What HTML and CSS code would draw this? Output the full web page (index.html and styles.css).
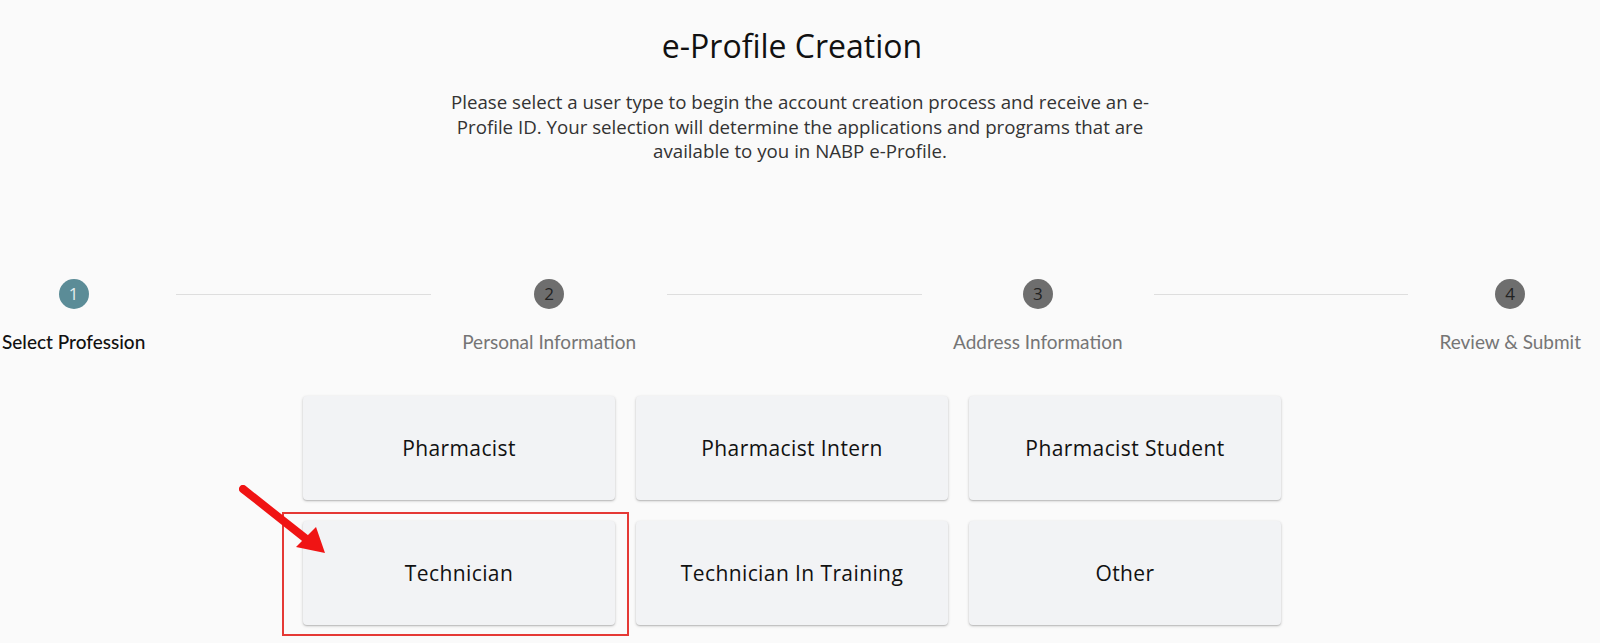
FILE: index.html
```html
<!DOCTYPE html>
<html lang="en">
<head>
    <meta charset="UTF-8">
    <meta name="viewport" content="width=device-width, initial-scale=1.0">
    <title>e-Profile Creation</title>
    <link rel="stylesheet" href="styles.css">
</head>
<body>
    <div class="page">
        <!-- Heading -->
        <div class="intro">
            <h1>e-Profile Creation</h1>
            <p>Please select a user type to begin the account creation process and receive an e-Profile ID. Your selection will determine the applications and programs that are available to you in NABP e-Profile.</p>
        </div>

        <!-- Stepper -->
        <div class="stepper">
            <div class="step active">
                <span class="step-icon">1</span>
                <span class="step-label">Select Profession</span>
            </div>
            <div class="connector"></div>
            <div class="step">
                <span class="step-icon">2</span>
                <span class="step-label">Personal Information</span>
            </div>
            <div class="connector"></div>
            <div class="step">
                <span class="step-icon">3</span>
                <span class="step-label">Address Information</span>
            </div>
            <div class="connector"></div>
            <div class="step">
                <span class="step-icon">4</span>
                <span class="step-label">Review &amp; Submit</span>
            </div>
        </div>

        <!-- Profession choices -->
        <div class="cards-wrap">
            <div class="cards">
                <div class="card">Pharmacist</div>
                <div class="card">Pharmacist Intern</div>
                <div class="card">Pharmacist Student</div>
                <div class="card highlighted">
                    Technician
                    <span class="highlight-box"></span>
                    <svg class="pointer" width="100" height="80" viewBox="0 0 100 80">
                        <line x1="4" y1="4" x2="66" y2="53" stroke="#f01414" stroke-width="8" stroke-linecap="round"/>
                        <polygon points="86,68 57,62 77,42" fill="#f01414"/>
                    </svg>
                </div>
                <div class="card">Technician In Training</div>
                <div class="card">Other</div>
            </div>
        </div>
    </div>
</body>
</html>
```

FILE: styles.css
```css
body {
    margin: 0;
    background: #fafafa;
    font-family: "Open Sans", Arial, sans-serif;
    color: #222;
}

.page {
    padding: 26px 0 40px;
}

.intro {
    text-align: center;
}

h1 {
    margin: 0;
    padding-right: 16px;
    font-size: 32px;
    font-weight: 500;
    line-height: 40px;
    color: #111;
}

.intro p {
    max-width: 720px;
    margin: 24px auto 0;
    font-size: 18.7px;
    line-height: 24.5px;
    color: #333;
}

.stepper {
    display: flex;
    align-items: flex-start;
    margin-top: 115px;
    padding: 0 19px 0 2px;
}

.step {
    display: flex;
    flex-direction: column;
    align-items: center;
}

.step-icon {
    width: 30px;
    height: 30px;
    border-radius: 50%;
    background: #6e6e6e;
    color: #222;
    font-size: 17px;
    line-height: 30px;
    text-align: center;
}

.step.active .step-icon {
    background: #5b8c97;
    color: #e6eef0;
}

.step-label {
    margin-top: 22px;
    font-family: Lato, "Liberation Sans", sans-serif;
    font-size: 19px;
    line-height: 22px;
    color: #757575;
}

.step.active .step-label {
    color: #111;
    font-weight: 500;
}

.connector {
    flex: 1;
    height: 1px;
    margin: 15px 31px 0;
    background: #dedede;
}

.cards-wrap {
    padding-right: 16px;
    margin-top: 43px;
}

.cards {
    width: 978px;
    margin: 0 auto;
    display: grid;
    grid-template-columns: repeat(3, 1fr);
    gap: 21px;
}

.card {
    position: relative;
    height: 104px;
    display: flex;
    align-items: center;
    justify-content: center;
    border-radius: 4px;
    background: #f2f3f5;
    box-shadow: 0 1px 3px rgba(0, 0, 0, 0.22), 0 1px 1px rgba(0, 0, 0, 0.1);
    font-size: 21px;
    font-weight: 500;
    letter-spacing: 0.4px;
    color: #111;
    cursor: pointer;
}

.highlight-box {
    position: absolute;
    left: -21px;
    right: -14px;
    top: -9px;
    bottom: -11px;
    border: 2px solid #e53935;
    pointer-events: none;
}

.pointer {
    position: absolute;
    left: -64px;
    top: -36px;
}
```
